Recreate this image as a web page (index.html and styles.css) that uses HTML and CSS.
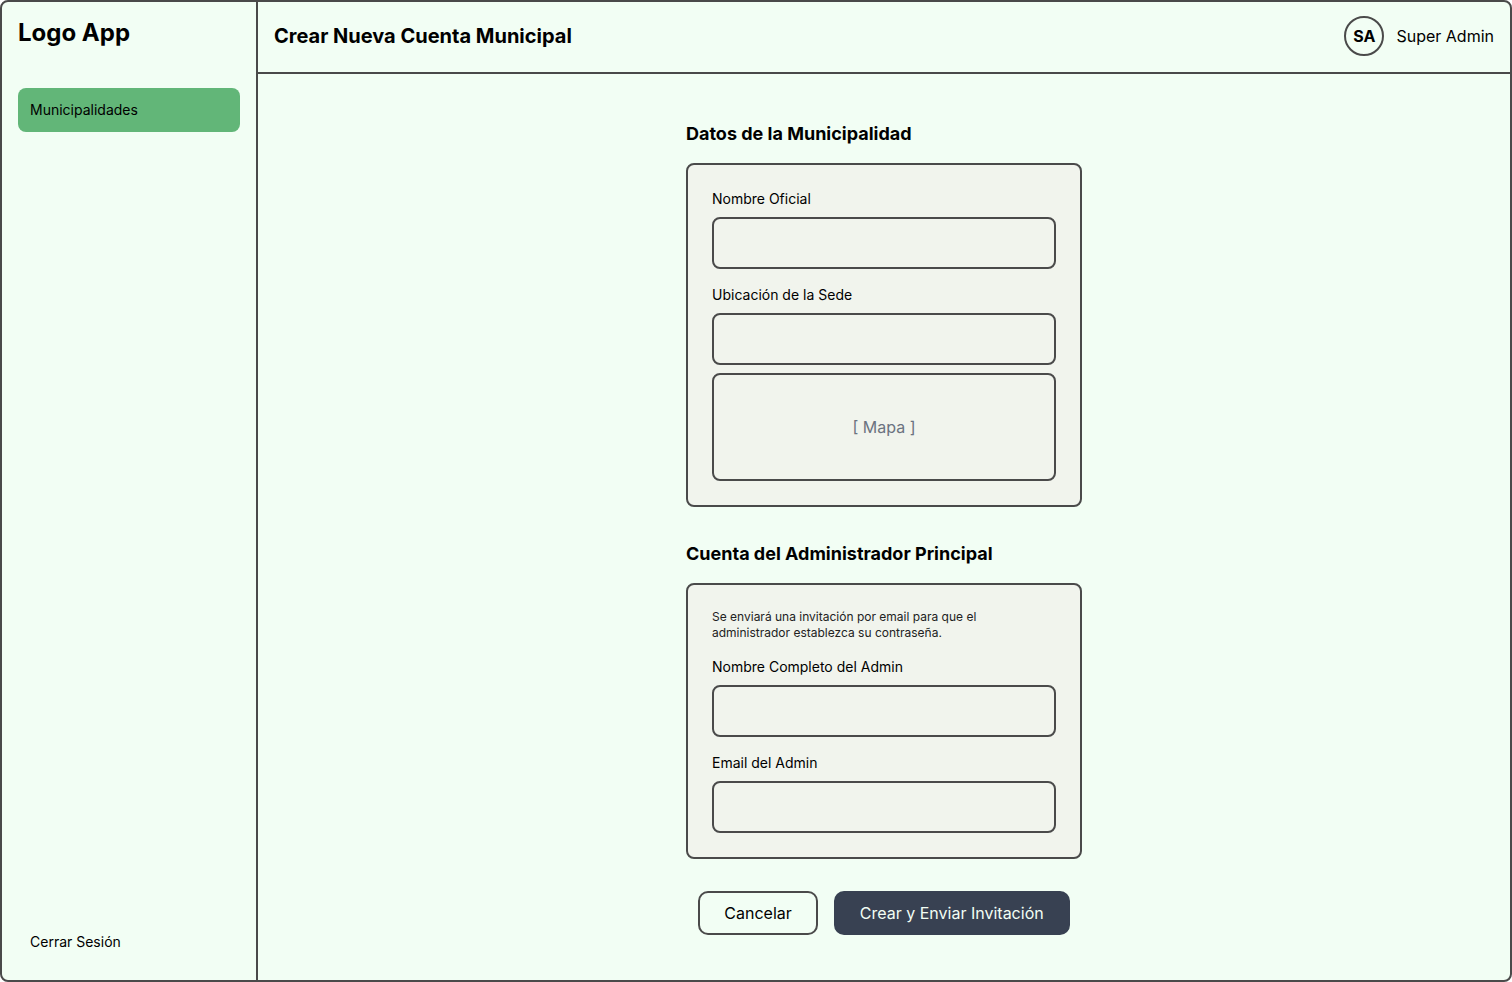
FILE: index.html
```html
<!DOCTYPE html>
<html lang="es">
<head>
  <meta charset="utf-8">
  <meta name="viewport" content="width=device-width, initial-scale=1">
  <title>Crear Nueva Cuenta Municipal</title>
  <link rel="stylesheet" href="styles.css">
</head>
<body>
  <div class="app">
    <aside class="sidebar">
      <div class="logo">Logo App</div>
      <nav class="nav" aria-label="Principal">
        <a class="nav-link nav-link-active" href="#municipalidades" aria-current="page">Municipalidades</a>
      </nav>
      <a class="nav-link" href="#salir">Cerrar Sesión</a>
    </aside>
    <div class="content">
      <header class="topbar">
        <h1 class="page-title">Crear Nueva Cuenta Municipal</h1>
        <div class="user">
          <span class="avatar">SA</span>
          <span>Super Admin</span>
        </div>
      </header>
      <main class="main">
        <form class="form">
          <section class="section">
            <h2 class="section-title">Datos de la Municipalidad</h2>
            <div class="card">
              <div class="field">
                <label class="label" for="nombre">Nombre Oficial</label>
                <input class="input" id="nombre" type="text">
              </div>
              <div class="field">
                <label class="label" for="ubicacion">Ubicación de la Sede</label>
                <input class="input" id="ubicacion" type="text">
                <div class="map">[ Mapa ]</div>
              </div>
            </div>
          </section>
          <section class="section">
            <h2 class="section-title">Cuenta del Administrador Principal</h2>
            <div class="card">
              <p class="note">Se enviará una invitación por email para que el administrador establezca su contraseña.</p>
              <div class="field">
                <label class="label" for="admin-nombre">Nombre Completo del Admin</label>
                <input class="input" id="admin-nombre" type="text">
              </div>
              <div class="field">
                <label class="label" for="admin-email">Email del Admin</label>
                <input class="input" id="admin-email" type="email">
              </div>
            </div>
          </section>
          <div class="actions">
            <button class="button" type="button">Cancelar</button>
            <button class="button button-primary" type="submit">Crear y Enviar Invitación</button>
          </div>
        </form>
      </main>
    </div>
  </div>
</body>
</html>
```

FILE: styles.css
```css
:root {
  --line: #4a4a4a;
  --page: #f2fef4;
  --card: #f1f4ed;
  --green: #62b678;
  --dark: #384152;
}

*,
*::before,
*::after {
  box-sizing: border-box;
}

body {
  margin: 0;
  background: #fff;
  color: #000;
  font: 400 16px/24px Inter, "Liberation Sans", sans-serif;
}

h1,
h2,
p {
  margin: 0;
}

.app {
  display: flex;
  min-height: 100vh;
  border: 2px solid var(--line);
  border-radius: 8px;
  background: var(--page);
}

.sidebar {
  display: flex;
  flex-direction: column;
  flex: none;
  width: 256px;
  padding: 16px;
  border-right: 2px solid var(--line);
}

.logo {
  margin-bottom: 40px;
  font-size: 24px;
  font-weight: 700;
  line-height: 30px;
}

.nav {
  flex: 1;
}

.nav-link {
  display: block;
  padding: 12px;
  border-radius: 8px;
  color: inherit;
  font-size: 14px;
  line-height: 20px;
  text-decoration: none;
}

.nav-link-active {
  background: var(--green);
}

.content {
  display: flex;
  flex-direction: column;
  flex: 1;
  min-width: 0;
}

.topbar {
  display: flex;
  align-items: center;
  justify-content: space-between;
  padding: 14px 16px 16px;
  border-bottom: 2px solid var(--line);
}

.page-title {
  font-size: 20px;
  font-weight: 700;
  line-height: 28px;
}

.user {
  display: flex;
  align-items: center;
  gap: 12px;
}

.avatar {
  display: grid;
  place-items: center;
  width: 40px;
  height: 40px;
  border: 2px solid var(--line);
  border-radius: 50%;
  font-weight: 700;
}

.main {
  display: flex;
  flex: 1;
  align-items: center;
  justify-content: center;
  padding: 24px;
}

.form {
  display: flex;
  flex-direction: column;
  gap: 32px;
  width: 100%;
  max-width: 396px;
}

.section {
  display: flex;
  flex-direction: column;
  gap: 14px;
}

.section-title {
  font-size: 18px;
  font-weight: 700;
  line-height: 30px;
}

.card {
  display: flex;
  flex-direction: column;
  gap: 16px;
  padding: 24px;
  border: 2px solid var(--line);
  border-radius: 8px;
  background: var(--card);
}

.field {
  display: flex;
  flex-direction: column;
  gap: 8px;
}

.label {
  font-size: 14px;
  line-height: 20px;
}

.input {
  width: 100%;
  height: 52px;
  padding: 12px;
  border: 2px solid var(--line);
  border-radius: 8px;
  background: transparent;
  color: inherit;
  font: inherit;
}

.map {
  display: grid;
  place-items: center;
  height: 108px;
  border: 2px solid var(--line);
  border-radius: 8px;
  color: #6b7280;
}

.note {
  color: #222;
  font-size: 12px;
  line-height: 16px;
}

.actions {
  display: flex;
  justify-content: center;
  gap: 16px;
}

.button {
  padding: 8px 24px;
  border: 2px solid var(--line);
  border-radius: 10px;
  background: transparent;
  color: inherit;
  font: inherit;
}

.button-primary {
  border-color: var(--dark);
  background: var(--dark);
  color: var(--page);
}
```
